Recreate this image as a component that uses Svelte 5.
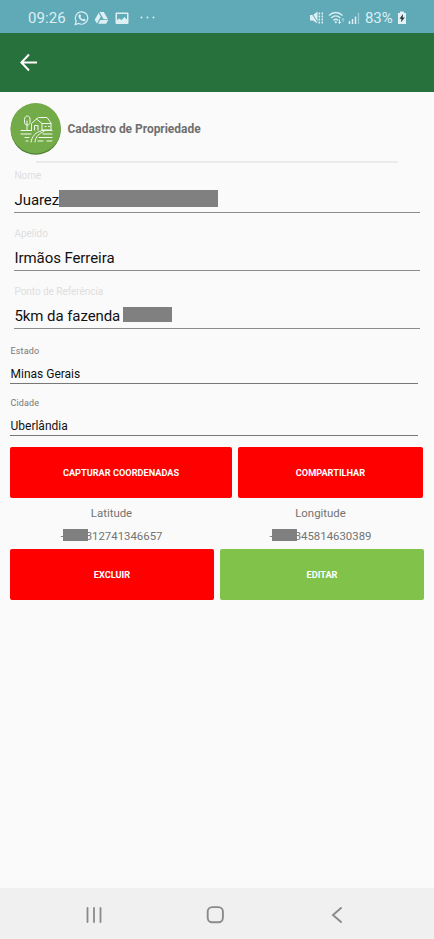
<script>
  const fields = [
    { label: "Nome", value: "Juarez", mask: "name" },
    { label: "Apelido", value: "Irmãos Ferreira" },
    { label: "Ponto de Referência", value: "5km da fazenda", mask: "place" },
  ];

  const selects = [
    { label: "Estado", value: "Minas Gerais" },
    { label: "Cidade", value: "Uberlândia" },
  ];
</script>

<style>
  :global(body) {
    background: #fafafa;
  }

  .screen {
    display: flex;
    flex-direction: column;
    width: 434px;
    height: 939px;
    background: #fafafa;
    font-family: Roboto, "Liberation Sans", sans-serif;
    color: #111;
  }

  svg {
    display: block;
    flex: none;
  }

  .status {
    display: flex;
    align-items: center;
    box-sizing: border-box;
    height: 33px;
    padding: 2px 27px 0 28px;
    background: #60a9b7;
    color: #dceff2;
    font-size: 15px;
  }
  .status__time {
    width: 46px;
    letter-spacing: 0.1px;
  }
  .status__icons {
    margin-right: auto;
  }
  .status__percent {
    width: 32px;
    margin-left: 5px;
    font-size: 15px;
    letter-spacing: -0.1px;
  }

  .toolbar {
    display: flex;
    align-items: center;
    box-sizing: border-box;
    height: 59px;
    padding-left: 19px;
    background: #27713d;
  }

  .content {
    flex: 1;
    padding: 11px 10px 0;
  }

  .title {
    display: flex;
    align-items: center;
    height: 52px;
  }
  .title h1 {
    margin: 0 0 0 5.5px;
    font-size: 12px;
    font-weight: 700;
    letter-spacing: -0.03px;
    color: #707070;
  }
  .divider {
    height: 2px;
    margin: 6px 26px 0;
    background: #ebebeb;
  }

  .field {
    box-sizing: border-box;
    height: 44px;
    margin: 0 4px 14px;
    border-bottom: 1px solid #8c8c8c;
  }
  .divider + .field {
    margin-top: 6px;
  }
  .field__label {
    padding-left: 0.5px;
    font-size: 10px;
    line-height: 13px;
    letter-spacing: -0.05px;
    color: #dedede;
  }
  .field__value {
    display: flex;
    margin-top: 6px;
    padding-left: 0.5px;
    font-size: 15px;
    line-height: 24px;
    letter-spacing: -0.08px;
  }

  .mask {
    flex: none;
    background: #808080;
  }
  .mask--name {
    width: 159px;
    height: 17px;
    margin-top: 2px;
  }
  .mask--place {
    width: 49px;
    height: 15px;
    margin: 3px 0 0 3px;
  }
  .mask--coord {
    width: 25px;
    height: 12px;
    margin: 0 -2px 0 -1px;
    z-index: 1;
  }

  .select {
    box-sizing: border-box;
    height: 39px;
    margin: 0 6px 13px 0;
    border-bottom: 1px solid #777;
  }
  .field + .select {
    margin-top: 16px;
  }
  .select__label {
    padding-left: 0.5px;
    font-size: 9px;
    line-height: 12px;
    letter-spacing: 0.15px;
    color: #777;
  }
  .select__value {
    margin-top: 9px;
    padding-left: 0.5px;
    font-size: 12px;
    line-height: 17px;
  }

  .buttons {
    display: flex;
    gap: 6px;
  }
  .select + .buttons {
    margin-top: -2px;
  }
  .btn {
    height: 51px;
    padding: 0;
    border: 0;
    border-radius: 2px;
    background: #fe0000;
    color: #fff;
    font: 700 9.2px Roboto, "Liberation Sans", sans-serif;
  }
  .btn--capture {
    width: 222px;
  }
  .btn--share {
    width: 185px;
  }
  .btn--half {
    width: 204px;
  }
  .btn--edit {
    background: #80c24a;
  }

  .coords {
    display: flex;
    height: 51px;
    color: #737373;
    font-size: 11.4px;
  }
  .coords__item {
    display: flex;
    flex-direction: column;
    align-items: center;
    width: 203px;
    line-height: 14px;
  }
  .coords__item:last-child {
    margin-left: 6px;
  }
  .coords__label {
    margin-top: 8px;
  }
  .coords__value {
    display: flex;
    margin-top: 9px;
  }

  .navbar {
    display: flex;
    align-items: center;
    justify-content: space-between;
    box-sizing: border-box;
    height: 51px;
    padding: 2px 87px 0 84px;
    background: #f0f0f0;
  }
</style>

<div class="screen">
  <div class="status">
    <span class="status__time">09:26</span>
    <svg class="status__icons" width="84" height="16" viewBox="0 0 84 16" fill="none">
      <path d="M1.2 14.5l1-3.4A6.2 6.2 0 1 1 4.7 13.5z" stroke="#dceff2" stroke-width="1.2" />
      <path d="M5.2 4.6c.7-.6 1.2-.3 1.5.5l.4 1-.7 1c.6 1.2 1.4 1.9 2.6 2.4l.9-1 1.7.9c0 1.6-1.6 2-2.8 1.6C6.5 10.3 4.7 8.5 4.4 6.5c0-.8.3-1.4.8-1.9z" fill="#dceff2" />
      <g fill="#dceff2">
        <path d="M25.4 2h4.4l4.3 7.2h-4.4zM24.6 3l2.2 3.8-3.9 6.800-2.200-3.800zM26.300 10h8l-2.200 3.700h-8z" />
        <path fill-rule="evenodd" d="M42.500 2.500h11a1 1 0 0 1 1 1v9.500a1 1 0 0 1-1 1h-11a1 1 0 0 1-1-1V3.500a1 1 0 0 1 1-1zM43 4v6l2-1.500 2.500 1.500L50.500 7l2.500 2.500V4z" />
        <circle cx="67.500" cy="7.500" r="1" />
        <circle cx="73.500" cy="7.500" r="1" />
        <circle cx="79.500" cy="7.500" r="1" />
      </g>
    </svg>
    <svg width="50" height="16" viewBox="0 0 50 16" fill="none" stroke="#dceff2">
      <path d="M0 5h3l4.500-3.500v12L3 10.500H0z" fill="#dceff2" stroke="none" />
      <path d="M.5 1.500l8 12" stroke="#60a9b7" stroke-width="1" />
      <path d="M9.300 2.500v11M12.300 2.500v11" stroke-width="1.500" stroke-dasharray="2 1" />
      <path d="M19 5.500c4-4 9.500-4 13.500 0M21.200 8c2.900-2.700 6.300-2.700 9.200 0M23.300 10.400c1.600-1.500 3.500-1.500 5 0" stroke-width="1.300" />
      <path d="M25.800 10.800l1.300 1.200-1.300 1.400-1.300-1.400z" fill="#dceff2" stroke="none" />
      <path d="M29.500 9.500v4M28.300 12l1.200 1.500 1.200-1.500" />
      <path d="M33 8.500v4M31.800 10l1.200-1.500 1.200 1.500" opacity="0.500" />
      <path d="M39.500 11v3M42.500 9v5M45.500 6.500v7.500" stroke-width="1.500" />
      <path d="M48.500 3v11" stroke-width="1.300" opacity="0.500" />
    </svg>
    <span class="status__percent">83%</span>
    <svg width="10" height="14" viewBox="0 0 10 14">
      <path d="M3 .5h4V2h2v11H1V2h2z" fill="#e3f2f4" />
      <path d="M6 3L2.500 7.700h2L4 11.300l3.800-4.900H5.700z" fill="#24363b" />
    </svg>
  </div>

  <div class="toolbar">
    <svg width="20" height="20" viewBox="0 0 20 20" fill="none" stroke="#fff" stroke-width="2">
      <path d="M18 9.500H3M10 1.500l-7.600 8 7.600 8" />
    </svg>
  </div>

  <div class="content">
    <div class="title">
      <svg width="52" height="52" viewBox="0 0 52 52" fill="none">
        <circle cx="25.700" cy="26.700" r="25" fill="#4f7f34" />
        <circle cx="25.700" cy="25.300" r="25.200" fill="#74ab49" />
        <g stroke="#f4f9ef" stroke-width="1" stroke-linecap="round" stroke-linejoin="round">
          <path d="M17 26.500V18M14.500 16c0-4 5.500-4 5.500 0v3.500c0 3.500-5.500 3.500-5.500 0z" />
          <path d="M21.500 27v-6.500l5-4.500 5.500 4.500V27M24.500 27v-4.500h3.500V27M26.500 16l2-1.500h8.500l4 5.500v7h-9M32 20.500h9M35 23.500h1M38.500 23.500h1" />
          <path d="M11 27.500h10.500M11 31h10M33 31h9M15 34.500h4M29 34.500h13M16 38h2M28 38h5M37 38h5" />
          <path d="M32 27.500h10M31 28c-5 1-9 5-10 11M34 28.500c-5 2-8.500 5-9 10.500" />
        </g>
      </svg>
      <h1>Cadastro de Propriedade</h1>
    </div>
    <div class="divider"></div>

    {#each fields as field}
      <div class="field">
        <div class="field__label">{field.label}</div>
        <div class="field__value">
          <span>{field.value}</span>
          {#if field.mask}
            <span class="mask mask--{field.mask}"></span>
          {/if}
        </div>
      </div>
    {/each}

    {#each selects as select}
      <div class="select">
        <div class="select__label">{select.label}</div>
        <div class="select__value">{select.value}</div>
      </div>
    {/each}

    <div class="buttons">
      <button class="btn btn--capture">CAPTURAR COORDENADAS</button>
      <button class="btn btn--share">COMPARTILHAR</button>
    </div>

    <div class="coords">
      <div class="coords__item">
        <span class="coords__label">Latitude</span>
        <span class="coords__value">
          <span>-</span><span class="mask mask--coord"></span><span>312741346657</span>
        </span>
      </div>
      <div class="coords__item">
        <span class="coords__label">Longitude</span>
        <span class="coords__value">
          <span>-</span><span class="mask mask--coord"></span><span>345814630389</span>
        </span>
      </div>
    </div>

    <div class="buttons">
      <button class="btn btn--half">EXCLUIR</button>
      <button class="btn btn--half btn--edit">EDITAR</button>
    </div>
  </div>

  <div class="navbar">
    <svg width="20" height="20" viewBox="0 0 20 20" stroke="#8a8a8a" stroke-width="1.800" stroke-linecap="round">
      <path d="M3.500 3v14M10 3v14M16.500 3v14" />
    </svg>
    <svg width="20" height="20" viewBox="0 0 20 20" fill="none" stroke="#8a8a8a" stroke-width="1.900">
      <rect x="1.700" y="2.100" width="15.200" height="15.200" rx="4.500" />
    </svg>
    <svg width="20" height="20" viewBox="0 0 20 20" fill="none" stroke="#8a8a8a" stroke-width="1.900" stroke-linecap="round">
      <path d="M14 3l-8 7 8 7" />
    </svg>
  </div>
</div>
